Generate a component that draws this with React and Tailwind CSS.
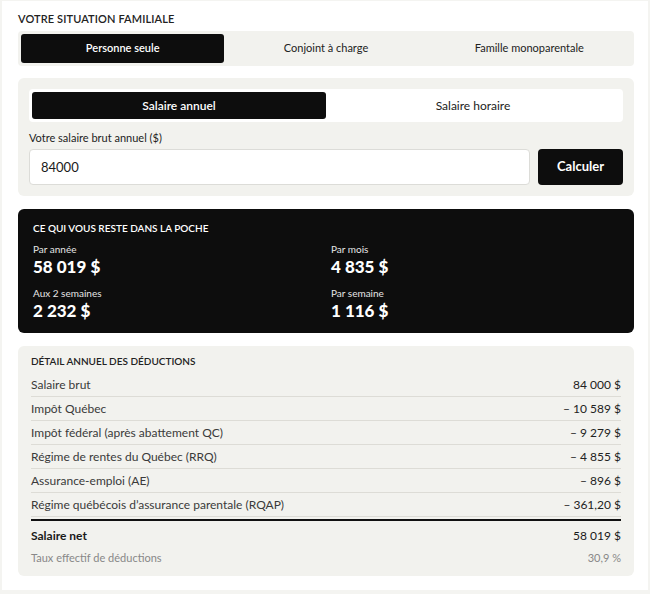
import { useState } from 'react'

const family = ['Personne seule', 'Conjoint à charge', 'Famille monoparentale']

const results = [
  { label: 'Par année', value: '58 019 $' },
  { label: 'Par mois', value: '4 835 $' },
  { label: 'Aux 2 semaines', value: '2 232 $' },
  { label: 'Par semaine', value: '1 116 $' },
]

const rows = [
  ['Salaire brut', '84 000 $'],
  ['Impôt Québec', '– 10 589 $'],
  ['Impôt fédéral (après abattement QC)', '– 9 279 $'],
  ['Régime de rentes du Québec (RRQ)', '– 4 855 $'],
  ['Assurance-emploi (AE)', '– 896 $'],
  ['Régime québécois d’assurance parentale (RQAP)', '– 361,20 $'],
]

export default function App() {
  const [situation, setSituation] = useState(0)
  const [mode, setMode] = useState(0)
  const [salary, setSalary] = useState('84000')

  return (
    <div className="min-h-screen bg-[#f4f4f1] pl-[2px] pt-px pb-[4px] text-[#1a1a1a]" style={{ fontFamily: 'Lato, "Open Sans", sans-serif' }}>
      <div className="bg-white w-[646px] h-[589px] px-4 pt-[11px]">
        {/* Situation familiale */}
        <h2 className="text-[11px] font-semibold uppercase tracking-[0.01em] text-[#222] leading-[14px]">Votre situation familiale</h2>
        <div className="mt-[5px] w-[616px] bg-[#f2f2ee] rounded-[4px] p-[3px] grid grid-cols-3">
          {family.map((f, i) => (
            <button key={f} onClick={() => setSituation(i)}
              className={`h-[29px] rounded-[3px] text-[11px] ${situation === i ? 'bg-[#0d0d0d] text-white font-semibold' : 'text-[#222]'}`}>
              {f}
            </button>
          ))}
        </div>

        {/* Salaire */}
        <div className="mt-3 w-[616px] bg-[#f2f2ee] rounded-[6px] px-[11px] pt-[11px] pb-[11px]">
          <div className="bg-white rounded-[4px] p-[3px] grid grid-cols-2">
            {['Salaire annuel', 'Salaire horaire'].map((m, i) => (
              <button key={m} onClick={() => setMode(i)}
                className={`h-[27px] rounded-[3px] text-[12px] ${mode === i ? 'bg-[#0d0d0d] text-white font-semibold' : 'text-[#222]'}`}>
                {m}
              </button>
            ))}
          </div>
          <label className="block mt-[9px] text-[11px] text-[#222] leading-[14px]">Votre salaire brut annuel ($)</label>
          <div className="mt-[4px] flex gap-2">
            <input value={salary} onChange={e => setSalary(e.target.value)}
              className="flex-1 h-[36px] bg-white border border-[#dcdcd8] rounded-[4px] px-[11px] text-[13px] text-[#1a1a1a] outline-none" />
            <button className="w-[85px] h-[36px] bg-[#0d0d0d] text-white rounded-[4px] text-[13px] font-bold">Calculer</button>
          </div>
        </div>

        {/* Résultat */}
        <div className="mt-[13px] w-[616px] h-[124px] bg-[#0d0d0d] rounded-[6px] px-[15px] pt-[13px] text-white">
          <h3 className="text-[10px] font-semibold uppercase leading-[12px]">Ce qui vous reste dans la poche</h3>
          <div className="mt-[9px] grid grid-cols-[298px_1fr] gap-y-[8px]">
            {results.map(r => (
              <div key={r.label}>
                <p className="text-[10px] leading-[12px] text-[#e6e6e6]">{r.label}</p>
                <p className="text-[17px] font-black leading-[24px]">{r.value}</p>
              </div>
            ))}
          </div>
        </div>

        {/* Détail */}
        <div className="mt-[13px] w-[616px] bg-[#f2f2ee] rounded-[6px] px-[13px] pt-[8px] pb-[10px]">
          <h3 className="text-[10px] font-semibold uppercase leading-[14px] text-[#222]">Détail annuel des déductions</h3>
          <div className="mt-[5px]">
            {rows.map(([l, v]) => (
              <div key={l} className="flex justify-between items-center h-[24px] border-b border-[#dddcd6] text-[12px]">
                <span className="text-[#3a3a3a]">{l}</span>
                <span className="text-[#222]">{v}</span>
              </div>
            ))}
          </div>
          <div className="mt-[2px] border-t-2 border-[#111] flex justify-between items-center h-[31px] text-[12px] font-bold">
            <span>Salaire net</span>
            <span className="font-normal">58 019 $</span>
          </div>
          <div className="flex justify-between items-center h-[16px] text-[11px] text-[#888]">
            <span>Taux effectif de déductions</span>
            <span>30,9 %</span>
          </div>
        </div>
      </div>
    </div>
  )
}
